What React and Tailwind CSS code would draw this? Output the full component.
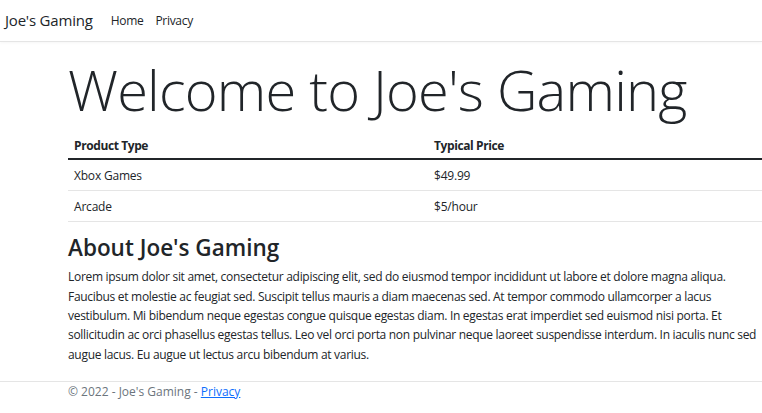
export default function App() {
  const rows = [
    { type: 'Xbox Games', price: '$49.99' },
    { type: 'Arcade', price: '$5/hour' },
  ];

  return (
    <div className="h-[413px] bg-white text-[#212529] font-['Open_Sans',sans-serif] overflow-hidden flex flex-col">
      {/* navbar */}
      <nav className="h-[42px] shrink-0 border-b border-[#e5e5e5] shadow-[0_1px_3px_rgba(0,0,0,0.04)] flex items-center pl-[5px]">
        <span className="text-[15px] tracking-[-0.2px] text-[#212529] mr-[12px]">Joe's Gaming</span>
        <a className="text-[12px] tracking-[-0.3px] text-[#212529] px-[6px]">Home</a>
        <a className="text-[12px] tracking-[-0.3px] text-[#212529] px-[6px]">Privacy</a>
      </nav>

      <main className="ml-[68px] w-[720px] flex-1">
        <h1 className="text-[56px] font-light tracking-[-0.8px] leading-[1.2] mt-[14px] mb-[7px] whitespace-nowrap">Welcome to Joe's Gaming</h1>

        <table className="w-full text-[12px] tracking-[-0.2px] border-collapse">
          <thead>
            <tr className="border-b-2 border-[#212529]">
              <th className="w-[360px] text-left font-bold tracking-[-0.4px] px-[6px] pt-[7px] pb-[3px]">Product Type</th>
              <th className="text-left font-bold tracking-[-0.4px] px-[6px] pt-[7px] pb-[3px]">Typical Price</th>
            </tr>
          </thead>
          <tbody>
            {rows.map(r => (
              <tr key={r.type} className="border-b border-[#e5e5e5]">
                <td className="px-[6px] pt-[7px] pb-[5px]">{r.type}</td>
                <td className="px-[6px] pt-[7px] pb-[5px]">{r.price}</td>
              </tr>
            ))}
          </tbody>
        </table>

        <h2 className="text-[22.5px] font-semibold leading-[1.2] mt-[12px] mb-[6px] whitespace-nowrap">About Joe's Gaming</h2>
        <p className="text-[12px] tracking-[-0.3px] leading-[19.4px] whitespace-nowrap">
          Lorem ipsum dolor sit amet, consectetur adipiscing elit, sed do eiusmod tempor incididunt ut labore et dolore magna aliqua.<br />
          Faucibus et molestie ac feugiat sed. Suscipit tellus mauris a diam maecenas sed. At tempor commodo ullamcorper a lacus<br />
          vestibulum. Mi bibendum neque egestas congue quisque egestas diam. In egestas erat imperdiet sed euismod nisi porta. Et<br />
          sollicitudin ac orci phasellus egestas tellus. Leo vel orci porta non pulvinar neque laoreet suspendisse interdum. In iaculis nunc sed<br />
          augue lacus. Eu augue ut lectus arcu bibendum at varius.
        </p>
      </main>

      <footer className="border-t border-[#e5e5e5] h-[32px] shrink-0 pt-[2px] pl-[68px] text-[12px] leading-[16px] text-[#6c757d]">
        <span>
          © 2022 - Joe's Gaming - <a className="text-[#0d6efd] underline">Privacy</a>
        </span>
      </footer>
    </div>
  );
}
